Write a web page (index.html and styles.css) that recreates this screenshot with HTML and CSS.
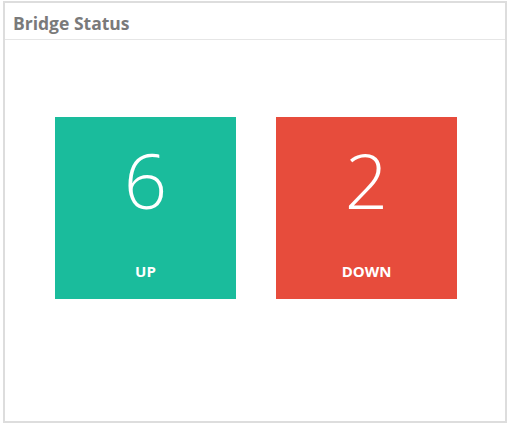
FILE: index.html
```html
<!DOCTYPE html>
<html lang="en">
<head>
  <meta charset="UTF-8" />
  <title>Bridge Status</title>
  <link rel="stylesheet" href="styles.css">
</head>
<body>
  <div class="panel">
    <div class="panel-header">Bridge Status</div>
    <div class="panel-body">
      <div class="tile up">
        <div class="count">6</div>
        <div class="label">UP</div>
      </div>
      <div class="tile down">
        <div class="count">2</div>
        <div class="label">DOWN</div>
      </div>
    </div>
  </div>
</body>
</html>
```

FILE: styles.css
```css
body {
  margin: 0;
  font-family: 'Open Sans', sans-serif;
  background: #fff;
}
.panel {
  margin: 1px 0 0 3px;
  width: 504px;
  height: 422px;
  box-sizing: border-box;
  border: 2px solid #ddd;
}
.panel-header {
  height: 37px;
  box-sizing: border-box;
  padding: 10px 8px 0;
  border-bottom: 1px solid #e6e6e6;
  font-size: 17.5px;
  font-weight: 700;
  color: #7a7a7a;
  line-height: 20px;
}
.panel-body {
  display: flex;
  justify-content: center;
  gap: 40px;
  padding: 77px 0 0 2px;
}
.tile {
  width: 181px;
  height: 182px;
  color: #fff;
  text-align: center;
}
.tile.up { background: #1abc9c; }
.tile.down { background: #e74c3c; }
.count {
  padding-top: 25px;
  font-size: 76px;
  font-weight: 300;
  line-height: 1;
}
.label {
  margin-top: 46px;
  font-size: 15px;
  font-weight: 700;
  line-height: 1;
}
```
